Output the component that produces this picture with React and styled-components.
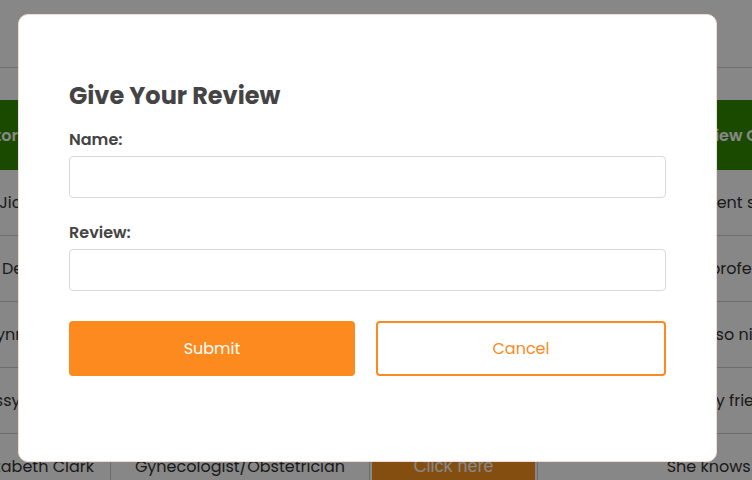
import React from "react";
import styled, { createGlobalStyle } from "styled-components";

const Global = createGlobalStyle`
  html, body { margin: 0; padding: 0; background: #ffffff; }
  body { font-family: Poppins, Inter, "Noto Sans", sans-serif; color: #333; }
  * { box-sizing: border-box; }
`;

const Page = styled.div`
  width: 752px;
  height: 480px;
  overflow: hidden;
  background: #fff;
`;

const NavBar = styled.div`
  height: 68px;
  border-bottom: 1px solid #d4d4d4;
`;

const TableArea = styled.div`
  margin-top: 32px;
  overflow: hidden;
`;

const Table = styled.div`
  display: grid;
  grid-template-columns: 211px 259px 168px 402px;
  margin-left: -100px;
  width: 1040px;
`;

const HeadCell = styled.div`
  height: 70px;
  background: #318c00;
  color: #fff;
  font-weight: 600;
  font-size: 16px;
  display: flex;
  align-items: center;
  justify-content: ${(p) => p.$align || "center"};
  padding: 0 ${(p) => p.$pad || "14px"};
  white-space: nowrap;
`;

const Cell = styled.div`
  height: 66px;
  border-bottom: 1px solid #cfcfcf;
  border-right: 1px solid #cfcfcf;
  font-size: 16px;
  color: #333;
  display: flex;
  align-items: center;
  justify-content: ${(p) => p.$align || "center"};
  padding: 0 ${(p) => (p.$tight ? "2px" : "16px")};
  white-space: nowrap;
  overflow: hidden;
`;

const RowButton = styled.button`
  width: 100%;
  height: 40px;
  border: none;
  background: #f7931e;
  color: #fff;
  font-family: "Liberation Sans", Arial, sans-serif;
  font-size: 18px;
`;

const Overlay = styled.div`
  position: fixed;
  inset: 0;
  background: rgba(0, 0, 0, 0.47);
  display: flex;
  align-items: flex-start;
  padding: 14px 0 0 18px;
`;

const Modal = styled.div`
  width: 699px;
  height: 448px;
  background: #fff;
  border: 1px solid #f4dcd6;
  border-radius: 10px;
  padding: 68px 50px 0 50px;
  display: flex;
  flex-direction: column;
`;

const Title = styled.h2`
  margin: 0 0 20px 0;
  font-size: 24px;
  line-height: 26px;
  font-weight: 700;
  color: #444;
`;

const Label = styled.label`
  display: block;
  font-size: 16px;
  line-height: 22px;
  font-weight: 600;
  color: #444;
  margin: ${(p) => (p.$first ? "0" : "24px")} 0 5px 0;
`;

const Input = styled.input`
  display: block;
  width: 100%;
  height: 42px;
  border: 1px solid #d9d9d9;
  border-radius: 4px;
  background: #fff;
  font-family: inherit;
  font-size: 16px;
  padding: 0 12px;
  outline: none;
`;

const Actions = styled.div`
  margin-top: 30px;
  display: grid;
  grid-template-columns: 286px 290px;
  justify-content: space-between;
`;

const Button = styled.button`
  height: 55px;
  border-radius: 4px;
  font-family: inherit;
  font-size: 16px;
  font-weight: 400;
  cursor: pointer;
  border: 2px solid #fc8a1e;
  background: ${(p) => (p.$primary ? "#fc8a1e" : "#fff")};
  color: ${(p) => (p.$primary ? "#fff" : "#fc8a1e")};
`;

const rows = [
  ["Dr Jicky Moran", "Cardiologist", "Excellent service"],
  ["Mia Dean Coyle", "Dermatologist", "Very professional"],
  ["Lynne Forster", "Pediatrician", "He was so nice to me"],
  ["Jessy Andrews", "Dentist", "Very friendly"],
  ["Elizabeth Clark", "Gynecologist/Obstetrician", "She knows her job"],
];

export default function App() {
  return (
    <>
      <Global />
      <Page>
        <NavBar />
        <TableArea>
          <Table>
            <HeadCell $align="flex-end" $pad="40px">Doctor Name</HeadCell>
            <HeadCell>Specialty</HeadCell>
            <HeadCell>Review</HeadCell>
            <HeadCell>Review Given</HeadCell>
            {rows.map((r, i) => (
              <React.Fragment key={i}>
                <Cell $align="flex-end">{r[0]}</Cell>
                <Cell>{r[1]}</Cell>
                <Cell $tight>
                  <RowButton>Click here</RowButton>
                </Cell>
                <Cell>{r[2]}</Cell>
              </React.Fragment>
            ))}
          </Table>
        </TableArea>
      </Page>
      <Overlay>
        <Modal>
          <Title>Give Your Review</Title>
          <Label $first htmlFor="name">Name:</Label>
          <Input id="name" type="text" />
          <Label htmlFor="review">Review:</Label>
          <Input id="review" type="text" />
          <Actions>
            <Button $primary>Submit</Button>
            <Button>Cancel</Button>
          </Actions>
        </Modal>
      </Overlay>
    </>
  );
}
